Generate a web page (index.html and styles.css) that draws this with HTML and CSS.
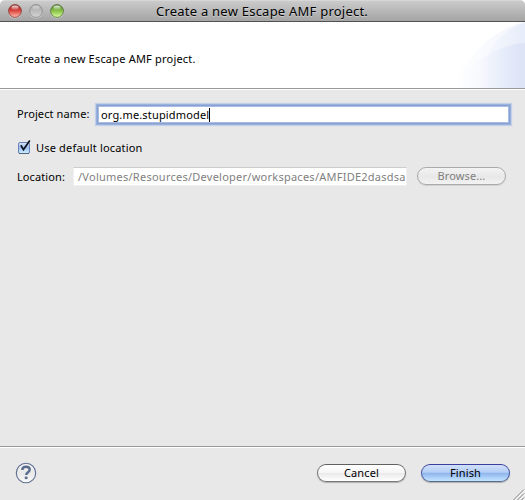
FILE: index.html
```html
<!DOCTYPE html>
<html lang="en">
<head>
<meta charset="utf-8">
<title>Create a new Escape AMF project.</title>
<link rel="stylesheet" href="styles.css">
</head>
<body>
<div class="window">
  <header class="titlebar">
    <svg class="lights" width="60" height="18" viewBox="0 0 60 18">
      <defs>
        <linearGradient id="red" x1="0" y1="0" x2="0" y2="1"><stop offset="0" stop-color="#8d2925"/><stop offset=".45" stop-color="#d93f39"/><stop offset="1" stop-color="#ffc0b4"/></linearGradient>
        <linearGradient id="gray" x1="0" y1="0" x2="0" y2="1"><stop offset="0" stop-color="#a2a2a2"/><stop offset=".45" stop-color="#b9b9b9"/><stop offset="1" stop-color="#d6d6d6"/></linearGradient>
        <linearGradient id="green" x1="0" y1="0" x2="0" y2="1"><stop offset="0" stop-color="#4b7a24"/><stop offset=".45" stop-color="#83bd42"/><stop offset="1" stop-color="#dcffa0"/></linearGradient>
        <linearGradient id="shine" x1="0" y1="0" x2="0" y2="1"><stop offset="0" stop-color="#fff" stop-opacity=".85"/><stop offset="1" stop-color="#fff" stop-opacity=".1"/></linearGradient>
      </defs>
      <circle cx="8" cy="9.8" r="6.8" fill="#d4d4d4"/>
      <circle cx="8" cy="9" r="6.4" fill="url(#red)" stroke="#8a3d3a" stroke-width=".9"/>
      <ellipse cx="8" cy="5.7" rx="3.6" ry="2.2" fill="url(#shine)"/>
      <circle cx="29" cy="9.8" r="6.8" fill="#d0d0d0"/>
      <circle cx="29" cy="9" r="6.4" fill="url(#gray)" stroke="#8b8b8b" stroke-width=".9"/>
      <ellipse cx="29" cy="5.7" rx="3.6" ry="2.2" fill="url(#shine)" opacity=".6"/>
      <circle cx="50" cy="9.8" r="6.8" fill="#d4d4d4"/>
      <circle cx="50" cy="9" r="6.4" fill="url(#green)" stroke="#5a753f" stroke-width=".9"/>
      <ellipse cx="50" cy="5.7" rx="3.6" ry="2.2" fill="url(#shine)"/>
    </svg>
    <h1 class="title">Create a new Escape AMF project.</h1>
  </header>

  <section class="banner">
    <p class="banner-text">Create a new Escape AMF project.</p>
    <svg class="swoosh" width="75" height="66" viewBox="0 0 75 66">
      <defs>
        <linearGradient id="s1" x1="0" y1="0" x2="75" y2="0" gradientUnits="userSpaceOnUse"><stop offset="0" stop-color="#fff"/><stop offset=".5" stop-color="#f9fafe"/><stop offset="1" stop-color="#f0f4fc"/></linearGradient>
        <linearGradient id="s2" x1="20" y1="0" x2="75" y2="0" gradientUnits="userSpaceOnUse"><stop offset="0" stop-color="#fcfdff"/><stop offset=".55" stop-color="#f0f4fc"/><stop offset="1" stop-color="#e6ecf9"/></linearGradient>
        <linearGradient id="s3" x1="5" y1="0" x2="75" y2="0" gradientUnits="userSpaceOnUse"><stop offset="0" stop-color="#fff"/><stop offset=".35" stop-color="#f7f9fe"/><stop offset=".75" stop-color="#e4eaf9"/><stop offset="1" stop-color="#dce3f5"/></linearGradient>
      </defs>
      <path d="M3 66C15 36 42 7 75 0V66Z" fill="url(#s1)"/>
      <path d="M25 66C31 36 50 7 75 1V66Z" fill="url(#s2)"/>
      <path d="M3 66C18 43 46 23 75 21V66Z" fill="url(#s3)"/>
    </svg>
  </section>

  <main class="content">
    <div class="row name-row">
      <label class="label name-label">Project name:</label>
      <div class="field focused"><span class="name-value">org.me.stupidmodel</span><i class="caret"></i></div>
    </div>
    <div class="row check-row">
      <svg class="checkbox" width="15" height="16" viewBox="0 0 15 16">
        <defs><linearGradient id="cb" x1="0" y1="0" x2="0" y2="1"><stop offset="0" stop-color="#dce9fb"/><stop offset=".45" stop-color="#9bbdec"/><stop offset="1" stop-color="#cdf0ff"/></linearGradient></defs>
        <rect x="1.5" y="3.5" width="11" height="11" rx="1.5" fill="url(#cb)" stroke="#6b80bb"/>
        <path d="M2 14.5H12" stroke="#53627e"/>
        <path d="M3.8 6.2L6.5 10.6L12.8 1.6" fill="none" stroke="#10151f" stroke-width="1.7"/>
      </svg>
      <span class="check-label">Use default location</span>
    </div>
    <div class="row location-row">
      <label class="label location-label">Location:</label>
      <div class="field disabled"><span class="path-value">/Volumes/Resources/Developer/workspaces/AMFIDE2dasdsa</span></div>
      <div class="button browse"><span>Browse...</span></div>
    </div>
  </main>

  <footer class="footer">
    <svg class="help" width="22" height="22" viewBox="0 0 22 22">
      <defs><linearGradient id="hp" x1="0" y1="0" x2="0" y2="1"><stop offset="0" stop-color="#f5f5f5"/><stop offset=".5" stop-color="#e8e8e8"/><stop offset="1" stop-color="#fafafa"/></linearGradient></defs>
      <circle cx="11" cy="11" r="9.7" fill="url(#hp)" stroke="#5d6f91" stroke-width="1.1"/>
      <path d="M7.3 8.1C7.3 5.8 8.8 4.8 11 4.8C13.3 4.8 14.7 6 14.7 7.7C14.7 10.3 11.2 10.2 11.2 13.1" fill="none" stroke="#5b6b8d" stroke-width="2.4"/>
      <rect x="9.8" y="14.6" width="2.7" height="2.5" fill="#5b6b8d"/>
    </svg>
    <div class="button cancel"><span>Cancel</span></div>
    <div class="button finish"><span>Finish</span></div>
    <svg class="grip" width="12" height="12" viewBox="0 0 12 12">
      <path d="M1.5 12L12 1.5M5.5 12L12 5.5M9.5 12L12 9.5" stroke="#fff" transform="translate(.3 .3)"/>
      <path d="M.5 12L11 1.5M4.5 12L11 5.5M8.5 12L11 9.5" stroke="#777" stroke-width=".9"/>
    </svg>
  </footer>
</div>
</body>
</html>
```
FILE: styles.css
```css
* { box-sizing: border-box; }

body {
  margin: 0;
  background: #fff;
  color: #000;
  font: 11px/16px "Noto Sans", "Open Sans", sans-serif;
  white-space: nowrap;
}

.window {
  display: flex;
  flex-direction: column;
  width: 525px;
  height: 500px;
  overflow: hidden;
  background: #e8e8e8;
  border-radius: 5px 5px 0 0;
}

.titlebar {
  display: flex;
  height: 22px;
  padding: 2px 0 0 7px;
  background: linear-gradient(#e3e3e3 0, #cbcbcb 1px, #a6a6a6 20px);
  border-bottom: 1px solid #515151;
}

.lights { flex: none; }

.title {
  margin: 0 0 0 89px;
  font-size: 13px;
  font-weight: 400;
  line-height: 19px;
  letter-spacing: .23px;
  text-shadow: 0 1px 0 rgba(255, 255, 255, .4);
}

.banner {
  display: flex;
  justify-content: space-between;
  height: 68px;
  padding-left: 16px;
  background: #fff;
  border-bottom: 1px solid #fff;
  box-shadow: inset 0 -1px #999;
}

.banner-text { margin: 29px 0 0; letter-spacing: .2px; }

.content { flex: 1; padding: 13px 0 0 17px; }

.row { display: flex; align-items: center; }

.name-row { height: 23px; }
.name-label { width: 80px; margin-top: -1px; letter-spacing: .1px; }

.field { display: flex; align-items: center; background: #fff; }

.focused {
  width: 413px;
  height: 19px;
  padding-left: 3px;
  border: 1px solid #88a1d3;
  box-shadow: 0 0 0 1px #9ab1de, 0 0 1px 2px #c3d0ea, inset 0 0 0 1px #a9bde4;
}

.name-value { letter-spacing: .16px; }
.caret { width: 1px; height: 14px; background: #000; }

.check-row { height: 20px; margin-top: 12px; }
.checkbox { margin-top: -3px; }
.check-label { margin-left: 4px; letter-spacing: .18px; }

.location-row { height: 20px; margin-top: 8px; }
.location-label { width: 56px; margin-top: 2px; letter-spacing: .1px; }

.disabled {
  width: 334px;
  height: 19px;
  padding: 2px 0 0 4px;
  overflow: hidden;
  color: #808080;
  border: 1px solid #f0f0f0;
  border-top-color: #ccc;
}

.path-value { letter-spacing: .25px; }

.button {
  display: flex;
  align-items: center;
  justify-content: center;
  width: 89px;
  height: 18px;
  padding-bottom: 1px;
  border: 1px solid #777;
  border-top-color: #606060;
  border-radius: 10px;
  background: linear-gradient(#fff 0, #f5f5f5 48%, #e9e9e9 50%, #fff 100%);
  box-shadow: 0 1px 1px rgba(0, 0, 0, .25);
}

.browse {
  margin: -1px 0 0 10px;
  padding-bottom: 0;
  letter-spacing: .1px;
  color: #808080;
  border-color: #aaa;
  background: linear-gradient(#f3f3f3, #e8e8e8 55%, #f3f3f3);
  box-shadow: 0 1px 1px rgba(0, 0, 0, .1);
}

.footer {
  position: relative;
  display: flex;
  height: 54px;
  padding: 17px 0 0 15px;
  border-top: 1px solid #999;
  box-shadow: inset 0 1px #fff;
}

.help { margin-top: -2px; }
.cancel { margin-left: 280px; letter-spacing: .15px; }

.finish {
  margin-left: 15px;
  letter-spacing: .15px;
  border-color: #4659a5;
  border-top-color: #3b3e9d;
  border-bottom-color: #596b8b;
  background: linear-gradient(#d0e0fa 0, #b4cef5 46%, #8db4ed 50%, #c3e5ff 100%);
}

.grip { position: absolute; right: 0; bottom: 0; }
```
